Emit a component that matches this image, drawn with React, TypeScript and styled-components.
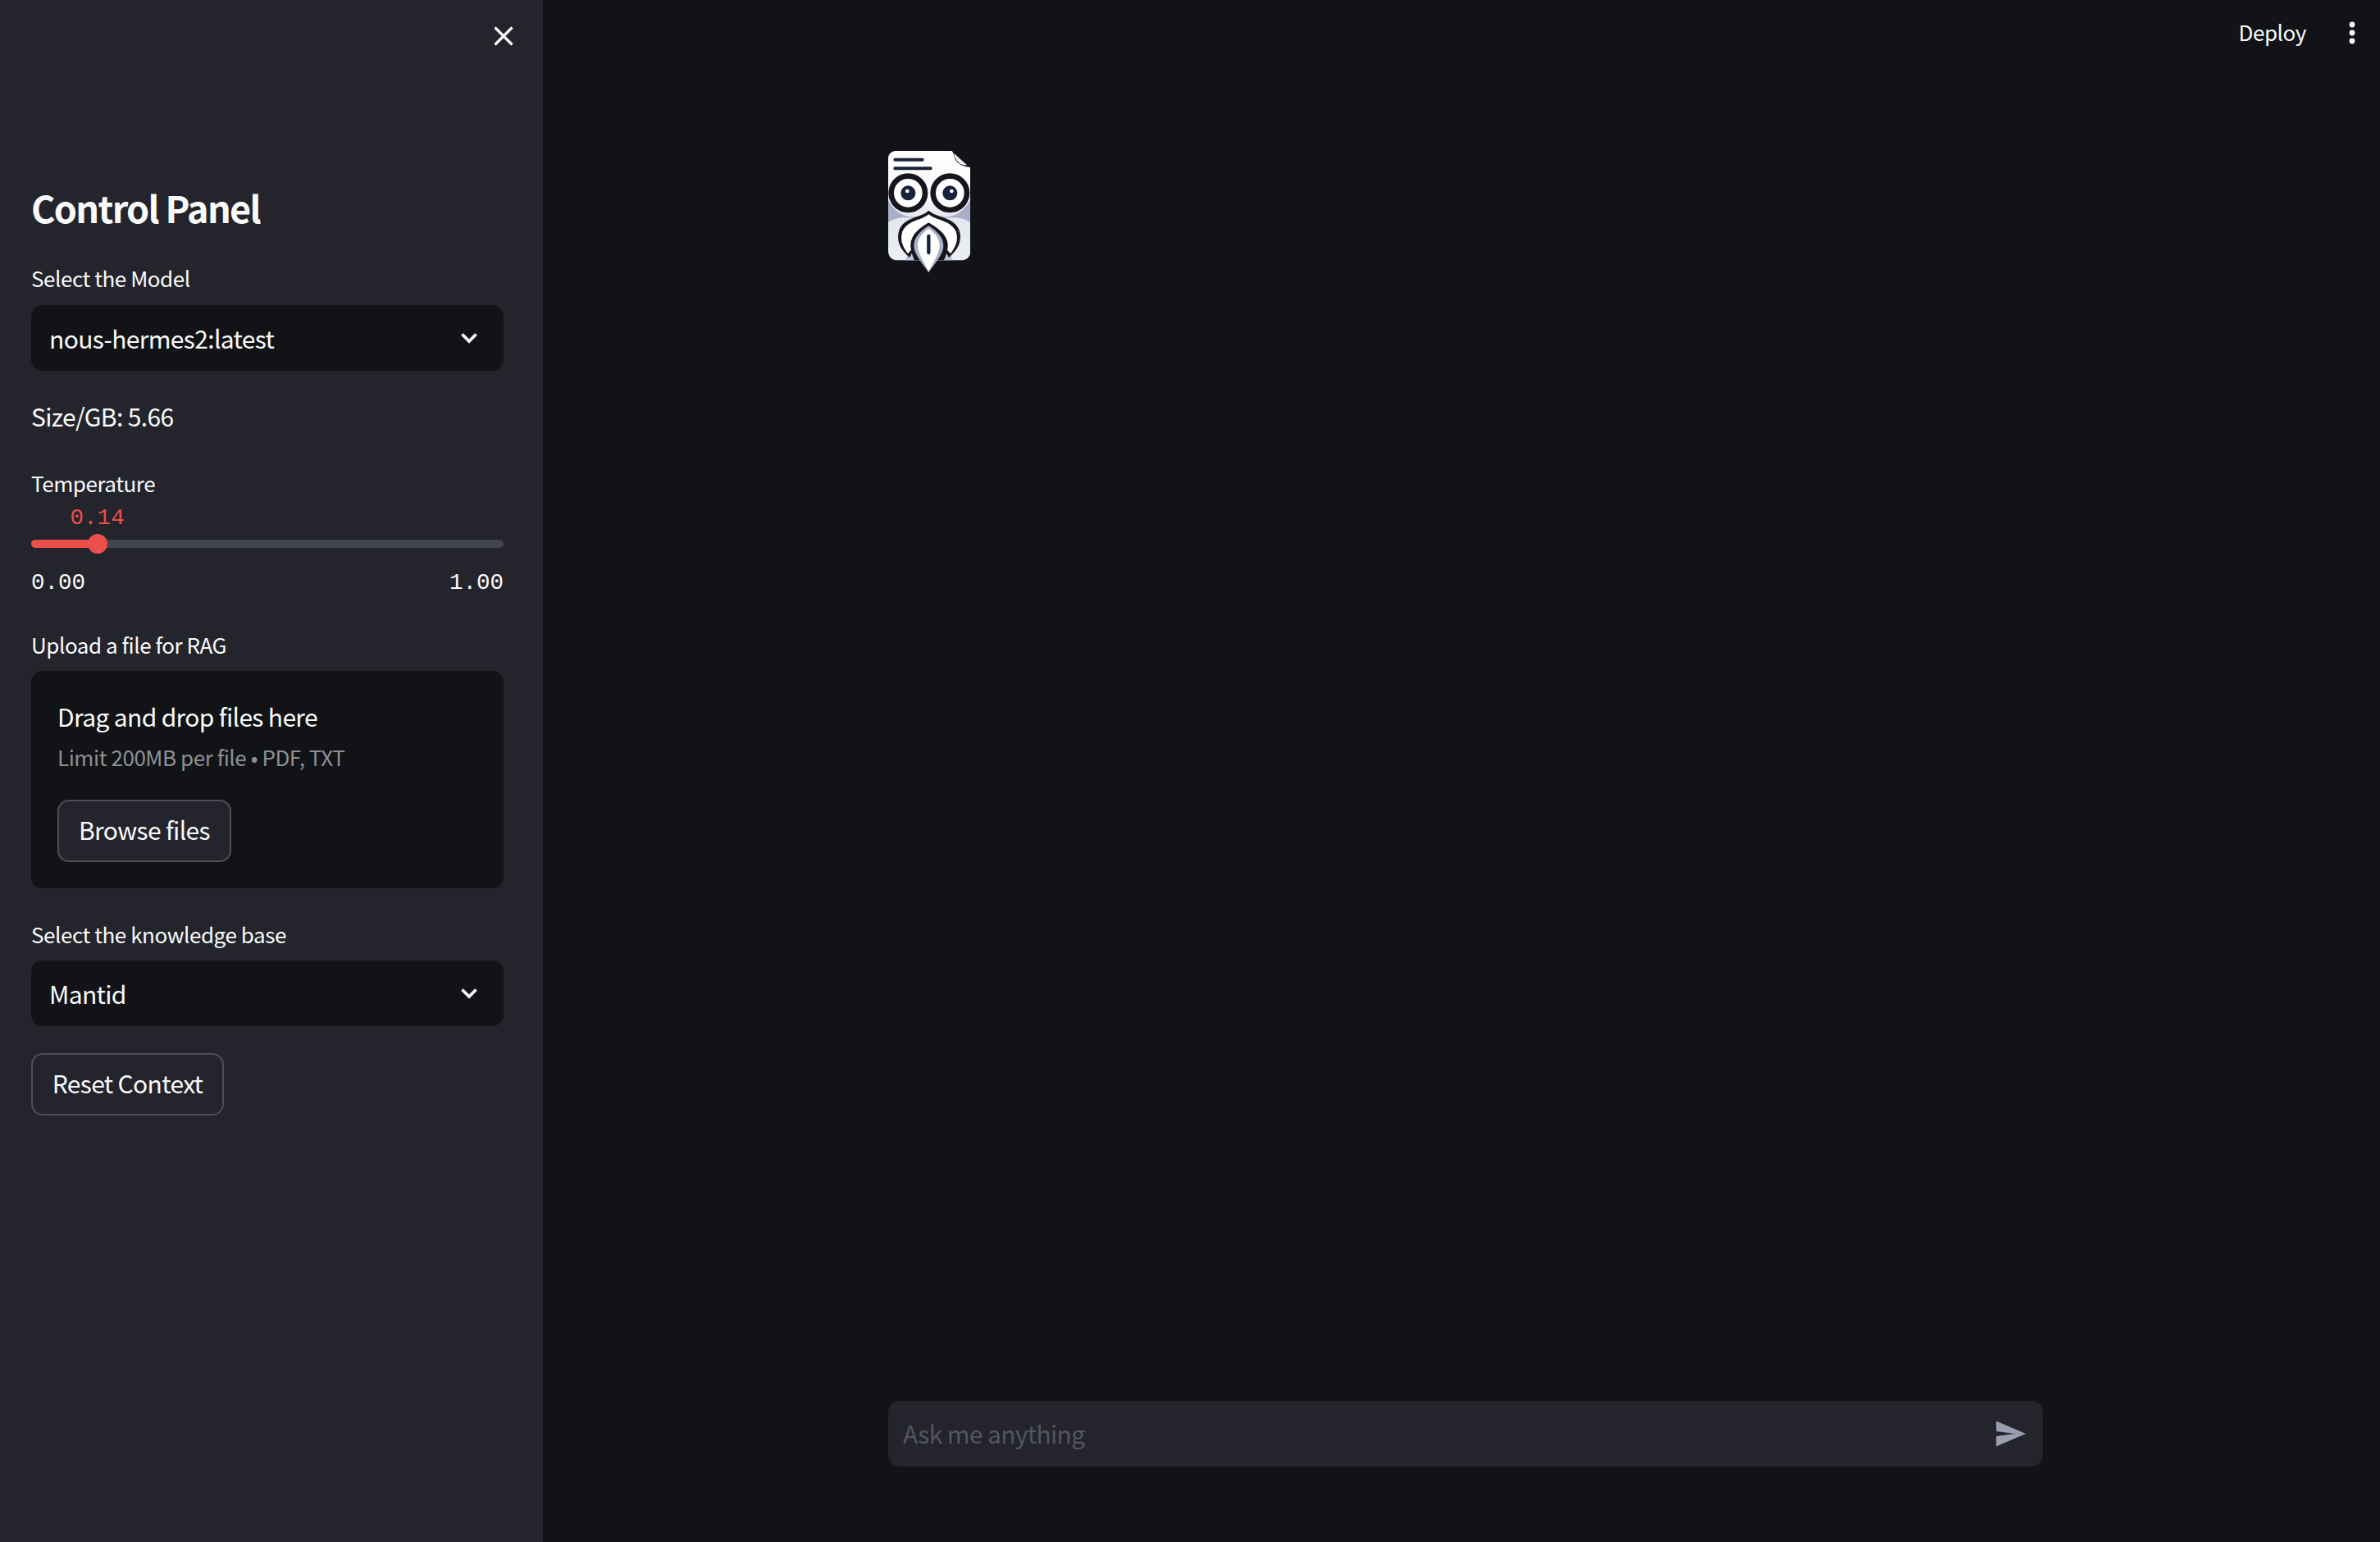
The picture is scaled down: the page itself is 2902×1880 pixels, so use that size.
import React from 'react';
import styled, { createGlobalStyle } from 'styled-components';

const TEMPERATURE = 0.14;

const GlobalStyle = createGlobalStyle`
  * {
    box-sizing: border-box;
  }
  html,
  body {
    margin: 0;
    padding: 0;
    background: #111317;
  }
  body {
    font-family: 'Noto Sans CJK JP', 'Noto Sans', sans-serif;
    color: #fafafa;
  }
`;

function CloseIcon() {
  return (
    <svg width="24" height="24" viewBox="0 0 24 24">
      <path d="M1.5 1.5L22.5 22.5M22.5 1.5L1.5 22.5" stroke="#fafafa" strokeWidth="3.2" fill="none" />
    </svg>
  );
}

function ChevronIcon() {
  return (
    <svg width="22" height="14" viewBox="0 0 22 14">
      <path d="M2.5 2.5L11 11L19.5 2.5" stroke="#fafafa" strokeWidth="3.8" fill="none" />
    </svg>
  );
}

function SendIcon() {
  return (
    <svg width="40" height="40" viewBox="0 0 24 24">
      <path d="M2.01 21L23 12 2.01 3 2 10l15 2-15 2z" fill="#9c9fb2" stroke="#9c9fb2" strokeWidth="0.4" strokeLinejoin="round" />
    </svg>
  );
}

function MoreIcon() {
  return (
    <svg width="8" height="28" viewBox="0 0 8 28">
      <circle cx="4" cy="4" r="3.4" fill="#fafafa" />
      <circle cx="4" cy="14" r="3.4" fill="#fafafa" />
      <circle cx="4" cy="24" r="3.4" fill="#fafafa" />
    </svg>
  );
}

// coordinates follow the 3x crop of the logo, so the viewBox is 300 wide
function OwlLogo() {
  return (
    <svg width="100" height="149" viewBox="0 0 300 447">
      <defs>
        <filter id="soft" x="-5%" y="-5%" width="110%" height="110%">
          <feGaussianBlur stdDeviation="2.2" />
        </filter>
        <linearGradient id="paper" x1="0" y1="0" x2="0" y2="1">
          <stop offset="0" stopColor="#ffffff" />
          <stop offset="0.45" stopColor="#f8f8fb" />
          <stop offset="0.6" stopColor="#e4e6f0" />
          <stop offset="1" stopColor="#eceef4" />
        </linearGradient>
      </defs>
      <g filter="url(#soft)">
        <path
          d="M28 0H228C236 0 238 6 240 16C244 40 262 56 300 60V372C300 388 286 400 268 400H32C14 400 0 386 0 366V28C0 12 12 0 28 0Z"
          fill="url(#paper)"
        />
        <path d="M240 8L288 52C268 54 244 40 240 8Z" fill="#f2f3f7" />
        <path d="M25 32H125M25 64H155" stroke="#1a2438" strokeWidth="12" strokeLinecap="round" />
        <path d="M0 180C30 236 84 258 148 230C212 258 270 236 300 180V262C270 240 230 240 190 250H110C70 240 30 240 0 262Z" fill="#a9afc9" />
        <path d="M62 400L84 360H216L238 400Z" fill="#c2c6dc" />
        <path d="M148 218C120 245 60 240 40 290C28 330 45 360 78 390L100 350H200L222 390C255 360 272 330 260 290C240 240 178 245 148 218Z" fill="#15171c" />
        <path d="M148 232C122 255 72 252 52 295C42 325 52 350 72 376L104 340H196L228 376C248 350 258 325 248 295C228 252 174 255 148 232Z" fill="#ffffff" />
        <path d="M148 262C110 285 80 310 82 350C84 370 90 385 96 400H204C210 385 216 370 218 350C220 310 186 285 148 262Z" fill="#15171c" />
        <path d="M148 274C116 294 92 318 94 350C96 380 125 410 148 445C171 410 200 380 202 350C204 318 180 294 148 274Z" fill="#aab0ca" />
        <path d="M148 284C124 300 106 322 108 350C110 376 132 408 148 440C164 408 186 376 188 350C190 322 172 300 148 284Z" fill="#ffffff" />
        <path d="M148 312V372" stroke="#14203a" strokeWidth="13" strokeLinecap="round" />
        <circle cx="73" cy="154" r="62" fill="#ffffff" stroke="#15171c" strokeWidth="20" />
        <circle cx="226" cy="154" r="62" fill="#ffffff" stroke="#15171c" strokeWidth="20" />
        <circle cx="73" cy="154" r="27" fill="#14203a" />
        <circle cx="226" cy="154" r="27" fill="#14203a" />
        <circle cx="70" cy="147" r="7" fill="#ffffff" />
        <circle cx="232" cy="147" r="7" fill="#ffffff" />
      </g>
    </svg>
  );
}

function App() {
  return (
    <Page>
      <GlobalStyle />
      <Sidebar>
        <CloseRow>
          <CloseButton aria-label="Close sidebar">
            <CloseIcon />
          </CloseButton>
        </CloseRow>
        <Title>Control Panel</Title>
        <FieldLabel $top={37}>Select the Model</FieldLabel>
        <Select $top={14}>
          <span>nous-hermes2:latest</span>
          <ChevronIcon />
        </Select>
        <SizeText>Size/GB: 5.66</SizeText>
        <FieldLabel $top={43}>Temperature</FieldLabel>
        <Track>
          <TrackFill style={{ width: `${TEMPERATURE * 100}%` }} />
          <Thumb style={{ left: `${TEMPERATURE * 100}%` }} />
          <ThumbValue style={{ left: `${TEMPERATURE * 100}%` }}>{TEMPERATURE.toFixed(2)}</ThumbValue>
        </Track>
        <ScaleRow>
          <span>0.00</span>
          <span>1.00</span>
        </ScaleRow>
        <FieldLabel $top={40}>Upload a file for RAG</FieldLabel>
        <DropZone>
          <DropTitle>Drag and drop files here</DropTitle>
          <DropHint>Limit 200MB per file • PDF, TXT</DropHint>
          <GhostButton $top={32} $width={212}>
            Browse files
          </GhostButton>
        </DropZone>
        <FieldLabel $top={39}>Select the knowledge base</FieldLabel>
        <Select $top={13}>
          <span>Mantid</span>
          <ChevronIcon />
        </Select>
        <GhostButton $top={33} $width={235}>
          Reset Context
        </GhostButton>
      </Sidebar>
      <Main>
        <Header>
          <DeployLink>Deploy</DeployLink>
          <MoreButton aria-label="Main menu">
            <MoreIcon />
          </MoreButton>
        </Header>
        <Content>
          <OwlLogo />
        </Content>
        <ChatBox>
          <ChatPlaceholder>Ask me anything</ChatPlaceholder>
          <SendIcon />
        </ChatBox>
      </Main>
    </Page>
  );
}

export default App;

const Page = styled.div`
  display: flex;
  width: 100%;
  height: 100vh;
  overflow: hidden;
  background: #111317;
`;
const Sidebar = styled.aside`
  display: flex;
  flex: 0 0 662px;
  flex-direction: column;
  align-items: flex-start;
  padding: 0 48px 0 38px;
  background: #23242c;
`;
const CloseRow = styled.div`
  display: flex;
  justify-content: flex-end;
  align-items: center;
  width: 100%;
  height: 88px;
`;
const CloseButton = styled.button`
  display: flex;
  margin-right: -12px;
  padding: 0;
  border: 0;
  background: none;
`;
const Title = styled.h2`
  margin: 135px 0 0;
  padding-bottom: 2px;
  line-height: 60px;
  font-size: 45px;
  font-weight: 600;
  letter-spacing: -1.7px;
  color: #fafafa;
`;
const FieldLabel = styled.label<{ $top: number }>`
  display: block;
  margin-top: ${(p) => p.$top}px;
  padding-bottom: 2px;
  line-height: 34px;
  font-size: 26px;
  letter-spacing: -0.45px;
  color: #fafafa;
`;
const Select = styled.div<{ $top: number }>`
  display: flex;
  justify-content: space-between;
  align-items: center;
  width: 100%;
  height: 80px;
  margin-top: ${(p) => p.$top}px;
  padding: 0 31px 0 22px;
  border-radius: 14px;
  background: #111317;
  font-size: 30px;
  letter-spacing: -0.65px;
`;
const SizeText = styled.p`
  margin: 35px 0 0;
  padding-bottom: 2px;
  line-height: 40px;
  font-size: 30px;
  letter-spacing: -0.65px;
`;
const Track = styled.div`
  position: relative;
  width: 100%;
  height: 10px;
  margin-top: 50px;
  border-radius: 5px;
  background: #43454e;
`;
const TrackFill = styled.div`
  height: 100%;
  border-radius: 5px 0 0 5px;
  background: #ea5049;
`;
const Thumb = styled.div`
  position: absolute;
  top: 50%;
  width: 24px;
  height: 24px;
  border-radius: 50%;
  background: #ea5049;
  transform: translate(-50%, -50%);
`;
const ThumbValue = styled.div`
  position: absolute;
  bottom: 18px;
  line-height: 36px;
  font-family: 'Liberation Mono', monospace;
  font-size: 27.5px;
  color: #ea5049;
  transform: translateX(-50%);
`;
const ScaleRow = styled.div`
  display: flex;
  justify-content: space-between;
  width: 100%;
  margin-top: 25px;
  line-height: 36px;
  font-family: 'Liberation Mono', monospace;
  font-size: 27.5px;
`;
const DropZone = styled.div`
  width: 100%;
  margin-top: 13px;
  padding: 35px 32px 32px;
  border-radius: 14px;
  background: #111317;
`;
const DropTitle = styled.div`
  padding-bottom: 2px;
  line-height: 40px;
  font-size: 30px;
  letter-spacing: -0.65px;
`;
const DropHint = styled.div`
  margin-top: 10px;
  padding-bottom: 2px;
  line-height: 36px;
  font-size: 26px;
  letter-spacing: -0.45px;
  color: #8f9095;
`;
const GhostButton = styled.button<{ $top: number; $width: number }>`
  display: block;
  width: ${(p) => p.$width}px;
  height: 76px;
  margin-top: ${(p) => p.$top}px;
  padding: 0 0 4px;
  border: 2px solid #4d4e56;
  border-radius: 14px;
  background: #23242c;
  font-family: inherit;
  font-size: 30px;
  letter-spacing: -0.65px;
  color: #fafafa;
`;
const Main = styled.main`
  display: flex;
  flex: 1;
  flex-direction: column;
  min-width: 0;
`;
const Header = styled.header`
  display: flex;
  justify-content: flex-end;
  align-items: center;
  height: 80px;
  padding-right: 30px;
`;
const DeployLink = styled.span`
  padding-bottom: 3px;
  font-size: 26px;
  letter-spacing: -0.4px;
  color: #fafafa;
`;
const MoreButton = styled.button`
  display: flex;
  margin-left: 52px;
  padding: 0;
  border: 0;
  background: none;
`;
const Content = styled.div`
  flex: 1;
  padding: 104px 0 0 421px;
`;
const ChatBox = styled.div`
  display: flex;
  justify-content: space-between;
  align-items: center;
  width: 1408px;
  height: 80px;
  margin: 0 0 92px 421px;
  padding: 0 20px 0 18px;
  border-radius: 14px;
  background: #23242c;
`;
const ChatPlaceholder = styled.span`
  padding-bottom: 2px;
  font-size: 30px;
  letter-spacing: -0.65px;
  color: #53555f;
`;
